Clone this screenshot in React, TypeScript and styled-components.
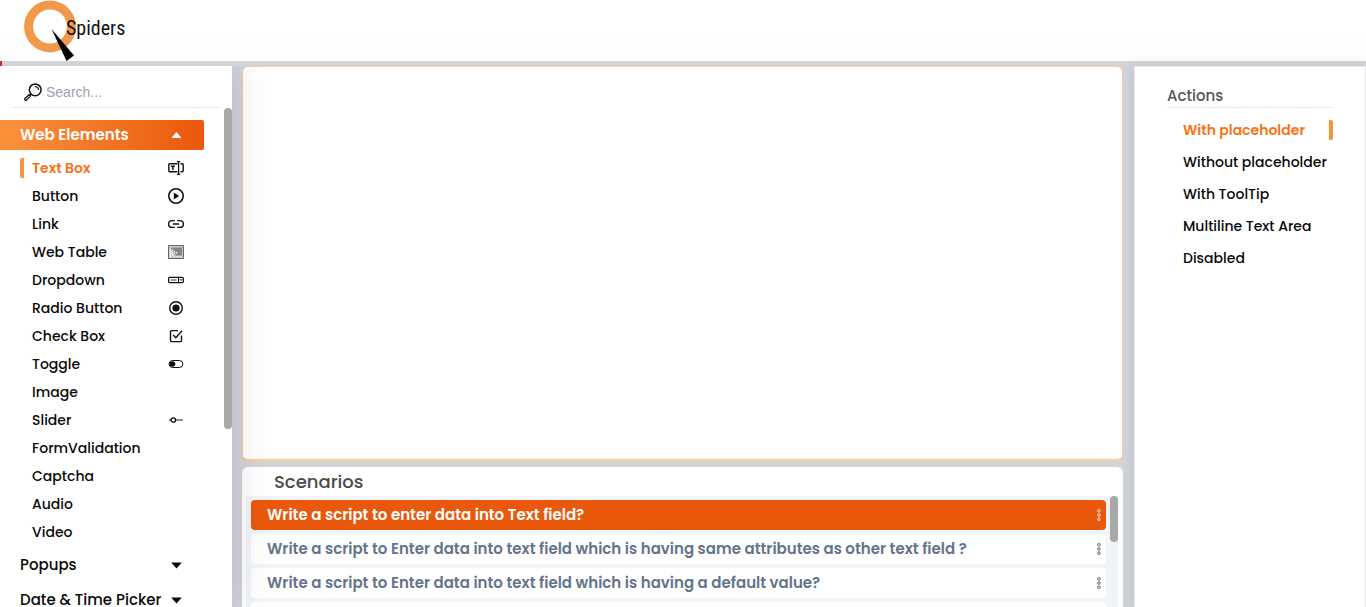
import React from "react";
import styled, { createGlobalStyle } from "styled-components";

const GlobalStyle = createGlobalStyle`
  *, *::before, *::after { box-sizing: border-box; }
  body { margin: 0; background: #d1d5db; overflow: hidden; }
  button, input { font: inherit; border: 0; background: none; padding: 0; margin: 0; color: inherit; }
  button { cursor: pointer; text-align: left; }
  ul { list-style: none; margin: 0; padding: 0; }
  a { color: inherit; text-decoration: none; }
  svg { display: block; flex: none; }
`;

const Page = styled.div`
  display: flex;
  flex-direction: column;
  height: 100vh;
  font-family: Poppins, Inter, sans-serif;
  font-size: 14px;
  font-weight: 500;
  color: #0a0a0a;
`;

const Header = styled.header`
  flex: none;
  height: 61px;
  padding-left: 22px;
  background: linear-gradient(#fff 60%, #fcfcfd);
`;

const ProgressTrack = styled.div`
  flex: none;
  height: 5px;
`;

const Progress = styled.div`
  width: 2px;
  height: 5px;
  background: #dc2626;
`;

const Body = styled.div`
  flex: 1;
  min-height: 0;
  display: grid;
  grid-template-columns: 232px minmax(0, 1fr) 232px;
`;

const Sidebar = styled.aside`
  position: relative;
  z-index: 1;
  display: flex;
  flex-direction: column;
  min-height: 0;
  background: #fff;
  box-shadow: 4px 0 36px rgba(0, 0, 0, 0.12);
  clip-path: inset(0 -60px 0 0);
`;

const Search = styled.label`
  flex: none;
  display: flex;
  align-items: center;
  gap: 4px;
  height: 42px;
  margin: 0 12px;
  padding: 10px 12px 0;
  border-bottom: 1px solid #e5e7eb;
`;

const SearchInput = styled.input`
  min-width: 0;
  flex: 1;
  outline: 0;
  font-family: "Liberation Sans", Arial, sans-serif;
  font-size: 14px;
  font-weight: 400;
  &::placeholder { color: #9ca3af; opacity: 1; }
`;

const ScrollArea = styled.div`
  flex: 1;
  min-height: 0;
  display: flex;
  justify-content: space-between;
  overflow: hidden;
`;

const Thumb = styled.div<{ $length: number }>`
  flex: none;
  width: 8px;
  height: ${(p) => p.$length}px;
  border-radius: 4px;
  background: #a8a8a8;
`;

const Nav = styled.nav`
  width: 204px;
  padding-top: 12px;
`;

const GroupButton = styled.button<{ $open?: boolean }>`
  display: flex;
  align-items: center;
  justify-content: space-between;
  width: 100%;
  height: 30px;
  margin-bottom: 5px;
  padding: 0 22px 0 20px;
  font-size: 15px;
  line-height: 20px;
  font-weight: ${(p) => (p.$open ? 600 : 500)};
  white-space: nowrap;
  color: ${(p) => (p.$open ? "#fff" : "#0a0a0a")};
  background: ${(p) => (p.$open ? "linear-gradient(90deg, #fb923c, #ea580c)" : "none")};
  border-radius: 0 2px 2px 0;
`;

const ItemList = styled.ul`
  padding: 3px 20px 0;
`;

const ItemLink = styled.a<{ $active?: boolean }>`
  display: flex;
  align-items: center;
  justify-content: space-between;
  height: 20px;
  margin-bottom: 8px;
  padding-left: 8px;
  border-left: 4px solid ${(p) => (p.$active ? "#fb923c" : "transparent")};
  border-radius: 2px;
  color: ${(p) => (p.$active ? "#f97316" : "#0a0a0a")};
  font-weight: ${(p) => (p.$active ? 600 : 500)};
`;

const Main = styled.main`
  display: flex;
  flex-direction: column;
  gap: 6px;
  min-height: 0;
  padding: 0 11px 0 10px;
`;

const Canvas = styled.section`
  flex: none;
  height: 65vh;
  background: #fff;
  border: 1px solid #fdcb94;
  border-bottom-width: 2px;
  border-radius: 6px;
`;

const Scenarios = styled.section`
  flex: 1;
  min-height: 0;
  display: flex;
  flex-direction: column;
  padding: 0 5px 0 4px;
  background: #fff;
  border-radius: 6px 6px 0 0;
`;

const ScenarioTitle = styled.h2`
  flex: none;
  margin: 0;
  padding-left: 28px;
  font-size: 18px;
  line-height: 29px;
  font-weight: 500;
  color: #4b4b4b;
`;

const ScenarioScroll = styled(ScrollArea)`
  gap: 4px;
  padding-left: 5px;
  background: #f1f5f9;
`;

const ScenarioList = styled.ul`
  flex: 1;
  min-width: 0;
  display: flex;
  flex-direction: column;
  gap: 4px;
  padding-top: 4px;
`;

const Scenario = styled.li<{ $active?: boolean }>`
  flex: none;
  display: flex;
  align-items: center;
  height: 30px;
  padding: 0 5px 0 16px;
  border-radius: 4px;
  font-size: 15px;
  font-weight: 600;
  color: ${(p) => (p.$active ? "#fff" : "#64748b")};
  background: ${(p) => (p.$active ? "#ea580c" : "#fff")};
`;

const ScenarioButton = styled.button`
  flex: 1;
  min-width: 0;
  white-space: nowrap;
`;

const MenuButton = styled.button<{ $active?: boolean }>`
  color: ${(p) => (p.$active ? "#fff" : "#444")};
`;

const Actions = styled.aside`
  padding: 19px 32px 0;
  background: #fff;
  border: 1px solid #e5e7eb;
  border-bottom: 0;
  box-shadow: -2px 0 12px rgba(0, 0, 0, 0.08);
`;

const ActionsTitle = styled.h2`
  margin: 0 0 12px;
  padding-bottom: 1px;
  font-size: 15px;
  line-height: 20px;
  font-weight: 500;
  color: #555;
  border-bottom: 1px solid #e5e7eb;
`;

const ActionLink = styled.a<{ $active?: boolean }>`
  display: block;
  height: 20px;
  margin-bottom: 12px;
  padding-left: 16px;
  line-height: 20px;
  white-space: nowrap;
  border-right: 4px solid ${(p) => (p.$active ? "#fb923c" : "transparent")};
  border-radius: 2px;
  color: ${(p) => (p.$active ? "#f97316" : "#0a0a0a")};
  font-weight: ${(p) => (p.$active ? 600 : 500)};
`;

const LogoSvg = styled.svg`
  font-family: "Agency FB", "Roboto Condensed", Roboto, sans-serif;
  font-weight: 400;
`;

const Logo = () => (
  <LogoSvg width="120" height="61" viewBox="0 0 120 61" role="img" aria-label="QSpiders">
    <circle cx="28" cy="26.5" r="21.4" fill="none" stroke="#f0994b" strokeWidth="9" />
    <path d="M29.5 29 52 55.5 44.5 61Z" fill="#000" />
    <text x="44" y="35" fontSize="20" fill="#111">Spiders</text>
  </LogoSvg>
);

const SearchIcon = () => (
  <svg width="18" height="18" viewBox="0 0 18 18" fill="none" stroke="#111" strokeWidth="1.5" strokeLinecap="round">
    <circle cx="11.2" cy="6.8" r="5.9" />
    <path d="M11.3 3.5a3.4 3.4 0 0 1 3.2 3" strokeWidth="1.1" />
    <path d="M6.9 11.1 5.8 12.2" />
    <path d="m5.2 11.7 1.3 1.2-3.9 4.2c-1.1.7-2.4-.4-1.7-1.6z" strokeWidth="1.3" />
  </svg>
);

const Caret = ({ up }: { up?: boolean }) => (
  <svg width="11" height="7" viewBox="0 0 11 7" fill="currentColor">
    <path d={up ? "M5.5 0 10.5 6H0.5Z" : "M0.2 0.5H10.8L5.5 6.5Z"} />
  </svg>
);

const Dots = () => (
  <svg width="5" height="14" viewBox="0 0 5 14" fill="none" stroke="currentColor" strokeWidth="0.8">
    <circle cx="2.9" cy="2.8" r="1.3" />
    <circle cx="2.9" cy="7" r="1.3" />
    <circle cx="2.9" cy="11.2" r="1.3" />
  </svg>
);

const glyphs: Record<string, React.ReactNode> = {
  text: (
    <>
      <path d="M9.5 3.7H1.8A1 1 0 0 0 .8 4.7v6.1a1 1 0 0 0 1 1H9.5M12.5 3.7h1.7a1 1 0 0 1 1 1v6.1a1 1 0 0 1-1 1h-1.7" strokeWidth="1.4" />
      <path d="M10.6 2v12M8.9 1.6h1.2l.5.5.5-.5h1.2M8.9 14.4h1.2l.5-.5.5.5h1.2" />
      <path d="M3 6.3h3.8M4.9 6.3v3.6" strokeWidth="1.5" />
    </>
  ),
  play: (
    <>
      <circle cx="8" cy="8" r="7.2" strokeWidth="1.6" />
      <path d="m5.8 4.4 5.4 3.6-5.4 3.6z" fill="currentColor" stroke="none" />
    </>
  ),
  link: <path d="M6.8 4.6H4a3.4 3.4 0 0 0 0 6.8h2.8M9.2 4.6H12a3.4 3.4 0 0 1 0 6.8H9.2M5 8h6" strokeWidth="1.4" />,
  table: (
    <>
      <path d="M.5 1.5h15v13H.5z" fill="#c9c9c9" stroke="#666" strokeWidth="1" />
      <path d="M3 3.5h11v8H8L3 6z" fill="#858585" stroke="none" />
      <path d="M2.5 5v8M4.5 5.5v6M6.5 7v3M8.5 8v2" stroke="#fff" strokeDasharray="1.5 0.7" />
      <path d="M6 12.5h8" stroke="#eee" strokeDasharray="1 1" strokeWidth="1" />
    </>
  ),
  dropdown: (
    <>
      <rect x=".6" y="5.4" width="14.8" height="5.2" rx="1" strokeWidth="1.2" />
      <path d="M10.5 5.3v5.4" strokeWidth="1" />
      <path d="M2.5 8h6" stroke="#555" strokeWidth="1.2" />
      <path d="m11.8 7 1.2 1.6L14.2 7" strokeWidth="0.9" />
    </>
  ),
  radio: (
    <>
      <circle cx="8" cy="8" r="6.3" strokeWidth="1.4" />
      <circle cx="8" cy="8" r="3.6" fill="currentColor" stroke="none" />
    </>
  ),
  check: (
    <>
      <path d="M10 2.6H3.5a1 1 0 0 0-1 1v9a1 1 0 0 0 1 1h9a1 1 0 0 0 1-1V7.5" strokeWidth="1.4" />
      <path d="m5.2 7 2.6 2.7L14 2.8" strokeWidth="1.4" />
    </>
  ),
  toggle: (
    <>
      <rect x="1.1" y="4.5" width="13.8" height="7" rx="3.5" strokeWidth="1" />
      <circle cx="4.5" cy="8" r="2.8" fill="currentColor" stroke="none" />
    </>
  ),
  slider: (
    <>
      <circle cx="5.3" cy="8" r="2.2" strokeWidth="1.3" />
      <path d="M1 8h2M7.7 8h7" strokeWidth="1.1" />
    </>
  ),
};

const Glyph = ({ name }: { name: string }) => (
  <svg width="16" height="16" viewBox="0 0 16 16" fill="none" stroke="currentColor" strokeWidth="1.3" color="#111">
    {glyphs[name]}
  </svg>
);

const elements: [string, string?][] = [
  ["Text Box", "text"],
  ["Button", "play"],
  ["Link", "link"],
  ["Web Table", "table"],
  ["Dropdown", "dropdown"],
  ["Radio Button", "radio"],
  ["Check Box", "check"],
  ["Toggle", "toggle"],
  ["Image"],
  ["Slider", "slider"],
  ["FormValidation"],
  ["Captcha"],
  ["Audio"],
  ["Video"],
];

const scenarios = [
  "Write a script to enter data into Text field?",
  "Write a script to Enter data into text field which is having same attributes as other text field ?",
  "Write a script to Enter data into text field which is having a default value?",
];

const actions = ["With placeholder", "Without placeholder", "With ToolTip", "Multiline Text Area", "Disabled"];

export default function App() {
  return (
    <Page>
      <GlobalStyle />
      <Header>
        <Logo />
      </Header>
      <ProgressTrack>
        <Progress />
      </ProgressTrack>
      <Body>
        <Sidebar>
          <Search>
            <SearchIcon />
            <SearchInput type="text" placeholder="Search..." aria-label="Search" />
          </Search>
          <ScrollArea>
            <Nav>
              <GroupButton $open aria-expanded="true">
                Web Elements <Caret up />
              </GroupButton>
              <ItemList>
                {elements.map(([label, icon], i) => (
                  <li key={label}>
                    <ItemLink href="#" $active={i === 0}>
                      {label}
                      {icon && <Glyph name={icon} />}
                    </ItemLink>
                  </li>
                ))}
              </ItemList>
              <GroupButton>
                Popups <Caret />
              </GroupButton>
              <GroupButton>
                Date &amp; Time Picker <Caret />
              </GroupButton>
            </Nav>
            <Thumb $length={321} />
          </ScrollArea>
        </Sidebar>
        <Main>
          <Canvas />
          <Scenarios>
            <ScenarioTitle>Scenarios</ScenarioTitle>
            <ScenarioScroll>
              <ScenarioList>
                {scenarios.map((text, i) => (
                  <Scenario key={text} $active={i === 0}>
                    <ScenarioButton>{text}</ScenarioButton>
                    <MenuButton $active={i === 0} aria-label="More">
                      <Dots />
                    </MenuButton>
                  </Scenario>
                ))}
                <Scenario aria-hidden="true" />
              </ScenarioList>
              <Thumb $length={46} />
            </ScenarioScroll>
          </Scenarios>
        </Main>
        <Actions>
          <ActionsTitle>Actions</ActionsTitle>
          {actions.map((label, i) => (
            <ActionLink key={label} href="#" $active={i === 0}>
              {label}
            </ActionLink>
          ))}
        </Actions>
      </Body>
    </Page>
  );
}
